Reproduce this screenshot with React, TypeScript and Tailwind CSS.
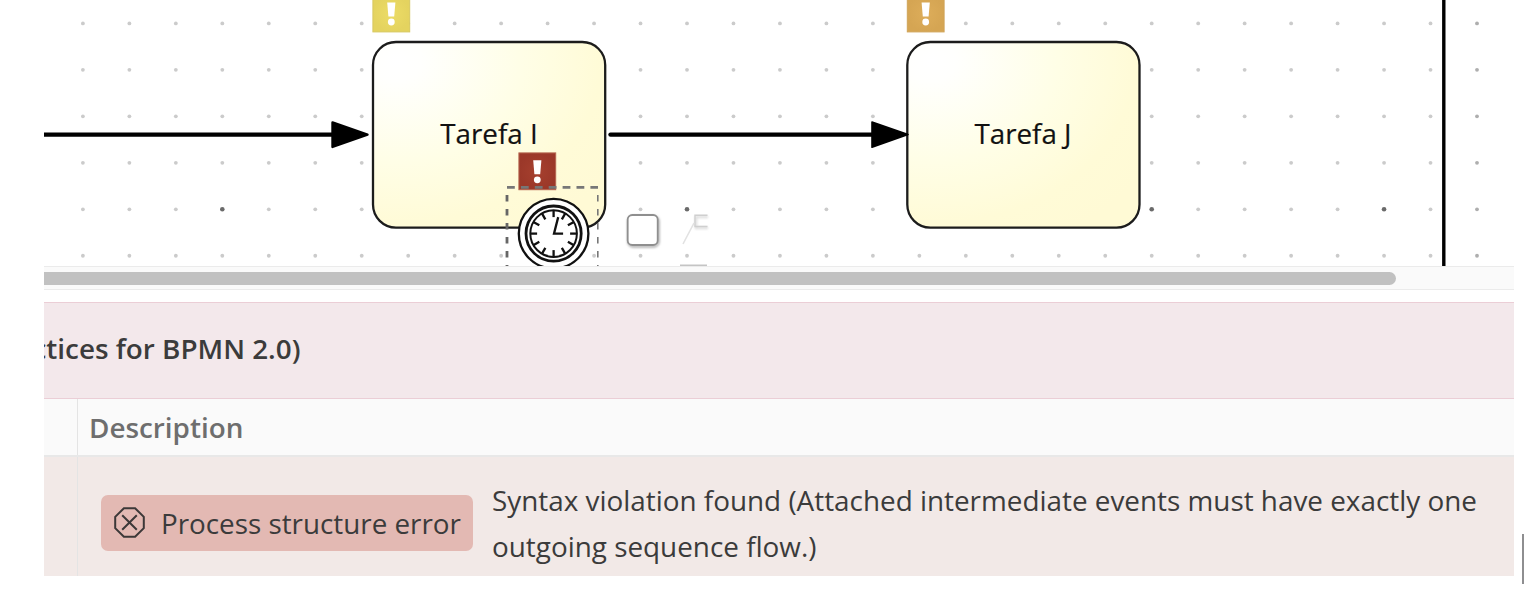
import React from "react";

const GRID = 46.47;
const columns = Array.from({ length: 31 }, (_, i) => 38.9 + i * GRID);
const rows = Array.from({ length: 6 }, (_, i) => 23.4 + i * GRID);
const majorColumns = [3, 13, 23, 28];

function GridDots() {
  return (
    <g>
      {rows.map((y, r) =>
        columns.map((x, c) => {
          const major = r === 4 && majorColumns.includes(c);
          return (
            <circle
              key={`${r}-${c}`}
              cx={x}
              cy={y}
              r={major ? 2.3 : 1.9}
              fill={major ? "#6a6a6a" : c === 30 ? "#aeaeae" : "#cbcbcb"}
            />
          );
        }),
      )}
    </g>
  );
}

function Task({ x, label, width }: { x: number; label: string; width: number }) {
  return (
    <g>
      <rect x={x} y={42} width={232.2} height={185.6} rx={23} fill="url(#taskFill)" stroke="#1c1c1c" strokeWidth={2.3} />
      <text
        x={x + 67.2}
        y={143.7}
        fontSize={27.8}
        textLength={width}
        lengthAdjust="spacingAndGlyphs"
        fill="#111"
        stroke="#111"
        strokeWidth={0.2}
        className="font-['Open_Sans',sans-serif]"
      >
        {label}
      </text>
    </g>
  );
}

function Alert({ x, y, fill, edge }: { x: number; y: number; fill: string; edge: string }) {
  return (
    <g transform={`translate(${x} ${y})`}>
      <rect x={0.5} y={0.5} width={36.8} height={36.8} fill={`url(#${fill})`} stroke={edge} />
      <path d="M14.8 7.8h8.2l-1.2 14h-5.8z" fill="#fff" />
      <circle cx={18.9} cy={27.4} r={3.4} fill="#fff" />
    </g>
  );
}

function Timer() {
  const ticks = Array.from({ length: 12 }, (_, i) => i * 30);
  return (
    <g transform="translate(509.6 233.6)" fill="none" stroke="#111">
      <circle r={34.8} fill="#fff" strokeWidth={2.3} />
      <circle r={27.6} strokeWidth={2.8} />
      <circle r={23.3} strokeWidth={2} />
      {ticks.map((a) => (
        <path key={a} d="M0 -23.4V-16.5" strokeWidth={2.3} transform={`rotate(${a})`} />
      ))}
      <path d="M4.6 -16.5L0.4 0H9.5" strokeWidth={2.3} />
    </g>
  );
}

function Diagram() {
  return (
    <svg width={1470} height={266} viewBox="0 0 1470 266" className="block shrink-0 bg-white">
      <defs>
        <radialGradient id="taskFill" cx="0.1" cy="0.1" r="1.1" fx="0.1" fy="0.1">
          <stop offset="0" stopColor="#ffffff" />
          <stop offset="0.1" stopColor="#fffffd" />
          <stop offset="0.5" stopColor="#fffee6" />
          <stop offset="0.8" stopColor="#fffbd7" />
          <stop offset="1" stopColor="#fffad5" />
        </radialGradient>
        <radialGradient id="yellow">
          <stop offset="0" stopColor="#ecdc66" />
          <stop offset="1" stopColor="#e4d35f" />
        </radialGradient>
        <radialGradient id="orange">
          <stop offset="0" stopColor="#ddad5a" />
          <stop offset="1" stopColor="#d5a553" />
        </radialGradient>
        <radialGradient id="red">
          <stop offset="0" stopColor="#a6402e" />
          <stop offset="1" stopColor="#9b3829" />
        </radialGradient>
        <filter id="soft" x="-30%" y="-30%" width="160%" height="160%">
          <feGaussianBlur stdDeviation="1" />
        </filter>
      </defs>
      <GridDots />
      <path d="M1399.8 0V266" stroke="#000" strokeWidth={3.4} />
      <Task x={329} label="Tarefa I" width={97.5} />
      <Task x={863.3} label="Tarefa J" width={97} />
      <path d="M0 134.6H290" stroke="#000" strokeWidth={4.4} />
      <path d="M288.5 122.5L323.5 134.6L288.5 146.9Z" stroke="#000" strokeWidth={2.4} strokeLinejoin="round" />
      <path d="M566.5 134.6H830" stroke="#000" strokeWidth={4.4} strokeLinecap="round" />
      <path d="M828 122L864 134.6L828 147.2Z" stroke="#000" strokeWidth={1.6} strokeLinejoin="round" />
      <Alert x={328.4} y={-5.4} fill="yellow" edge="#d8c860" />
      <Alert x={862.8} y={-5.4} fill="orange" edge="#d0a458" />
      <Alert x={474.4} y={152.4} fill="red" edge="#b5654f" />
      <path d="M463 187.3H554" stroke="#777" strokeWidth={2.8} strokeDasharray="7.8 6.1" />
      <path d="M463 195V266" stroke="#666" strokeWidth={2.8} strokeDasharray="6.5 7.5" />
      <path d="M553.8 195V266" stroke="#777" strokeWidth={1.6} strokeDasharray="6.5 7.5" />
      <Timer />
      <rect x={584.5} y={216.5} width={30} height={30} rx={5} fill="none" stroke="#bbb" strokeWidth={3} filter="url(#soft)" />
      <rect x={583.7} y={215} width={30} height={30} rx={4.5} fill="#fff" stroke="#8f8f8f" strokeWidth={1.8} />
      <path d="M664 217H652V228H664" fill="none" stroke="#dedede" strokeWidth={2.5} filter="url(#soft)" />
      <path d="M663.5 215.3H651V226.5H663.5" fill="none" stroke="#cfcfcf" strokeWidth={1.4} />
      <path d="M650 223L639 244" fill="none" stroke="#e2e2e2" strokeWidth={1.6} />
      <path d="M636 265.3H663" stroke="#c4c4c4" strokeWidth={1.6} />
    </svg>
  );
}

function ErrorBadge() {
  return (
    <div className="flex h-[56px] w-[372px] shrink-0 items-center rounded-[7px] bg-[#e3b9b3] pl-[13px]">
      <svg width={31} height={31} viewBox="0 0 31 31" fill="none" stroke="#3c3838" strokeWidth={2} className="-mt-[2px] shrink-0">
        <path d="M9.9 1.2H21.1L29.8 9.9V21.1L21.1 29.8H9.9L1.2 21.1V9.9Z" />
        <path d="M8.2 8.2L22.8 22.8M22.8 8.2L8.2 22.8" />
      </svg>
      <span className="ml-4 whitespace-nowrap text-[27.8px] leading-[46px]">Process structure error</span>
    </div>
  );
}

export default function App() {
  return (
    <div className="flex h-[594px] w-[1536px] overflow-hidden bg-white pl-[44px] font-['Open_Sans',sans-serif] text-[#3b3b3b]">
      <main className="flex h-[576px] w-[1470px] flex-col overflow-hidden">
        <Diagram />
        <div className="flex h-[24px] shrink-0 items-center border-y-[1.5px] border-[#ebebeb] bg-[#fafafa]">
          <div className="h-[13px] w-[1352px] rounded-r-full bg-[#c1c1c1]" />
        </div>
        <header className="mt-3 flex h-[97px] shrink-0 items-center justify-start border-y border-[#ebced6] bg-[#f3e8eb]">
          <div className="flex w-[256.5px] justify-end overflow-hidden pb-[5px]">
            <h2 className="whitespace-nowrap text-[27.85px] font-semibold leading-[46px]">ctices for BPMN 2.0)</h2>
          </div>
        </header>
        <div className="flex h-[58px] shrink-0 border-b-2 border-[#e8e8e8] bg-[#fafafa]">
          <div className="w-[34px] shrink-0 border-r border-[#e4e4e4]" />
          <div className="flex items-center pl-[11px] pt-[2px] text-[27.85px] font-semibold text-[#6e6e6e]">Description</div>
        </div>
        <div className="flex flex-1 bg-[#f2e9e7]">
          <div className="w-[34px] shrink-0 border-r border-[#e4e4e4]" />
          <div className="flex flex-1 items-start pl-[23px] pt-[20px]">
            <div className="pt-[18px]">
              <ErrorBadge />
            </div>
            <p className="ml-[19px] whitespace-nowrap text-[27.87px] leading-[46px]">
              Syntax violation found (Attached intermediate events must have exactly one
              <br />
              outgoing sequence flow.)
            </p>
          </div>
        </div>
      </main>
      <div className="ml-2 mt-[534px] h-[50px] w-[2px] bg-[#8e8e90]" />
    </div>
  );
}
